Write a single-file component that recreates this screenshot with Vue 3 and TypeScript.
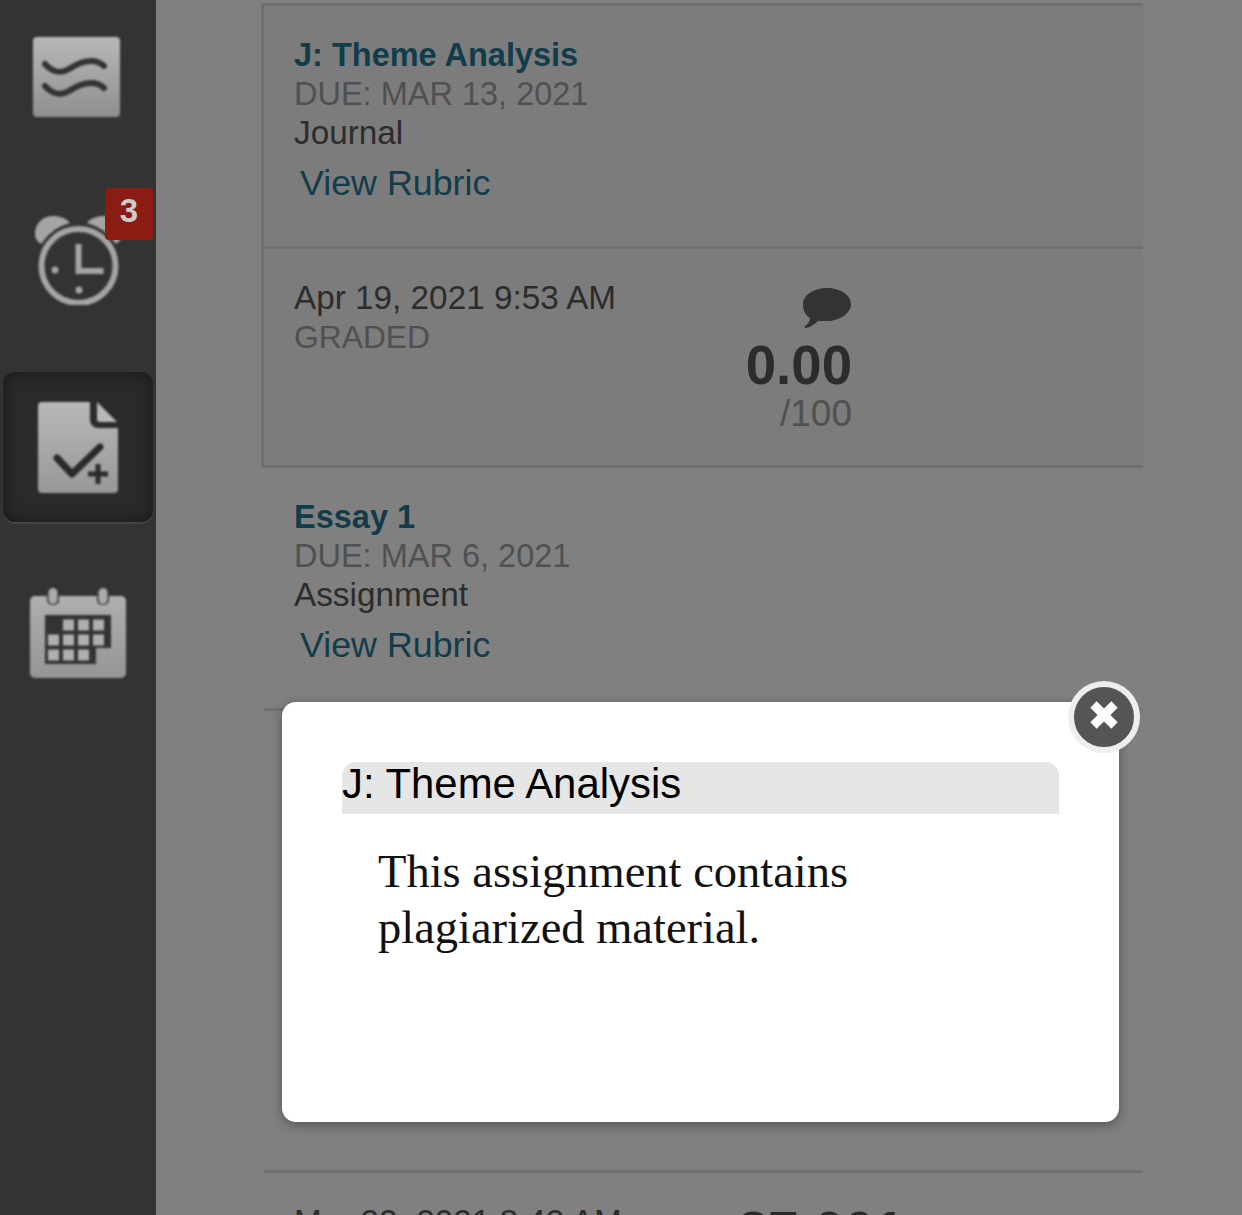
<script setup lang="ts">
interface Nav { id: string; active?: boolean }
const navs: Nav[] = [{ id: 'stream' }, { id: 'alarm' }, { id: 'grades', active: true }, { id: 'cal' }]
const calCells: [number, number][] = [
  [1, 0], [2, 0], [3, 0],
  [0, 1], [1, 1], [2, 1], [3, 1],
  [0, 2], [1, 2], [2, 2],
]
</script>

<template>
  <div class="page">
    <aside class="side">
      <div v-for="n in navs" :key="n.id" class="nav" :class="[n.id, { active: n.active }]">
        <svg v-if="n.id === 'stream'" width="90" height="82" viewBox="0 0 90 82">
          <defs>
            <linearGradient id="g1" x1="0" y1="0" x2="0" y2="1">
              <stop offset="0" stop-color="#b8b8b8" /><stop offset="1" stop-color="#8f8f8f" />
            </linearGradient>
          </defs>
          <rect x="2" y="1" width="87" height="80" rx="4" fill="url(#g1)" />
          <path d="M14 28C21 36 30 38 38 33S62 20 73 30M14 50C21 58 30 60 38 55S62 42 73 52" fill="none" stroke="#333" stroke-width="6" stroke-linecap="round" />
        </svg>
        <template v-else-if="n.id === 'alarm'">
          <svg width="93" height="96" viewBox="0 0 93 96">
            <path d="M3 25C3 14 11 7 21 7C28 7 34 9 38 14C25 18 16 25 10 35C5 33 3 29 3 25Z" fill="#a5a5a5" />
            <path d="M90 25C90 14 82 7 72 7C65 7 59 9 55 14C68 18 77 25 83 35C88 33 90 29 90 25Z" fill="#a5a5a5" />
            <circle cx="46.500" cy="57" r="37" fill="#333" stroke="#333" stroke-width="12" />
            <circle cx="46.500" cy="57" r="37" fill="#333" stroke="#a5a5a5" stroke-width="6" />
            <path d="M46.500 35v27h25" fill="none" stroke="#a5a5a5" stroke-width="6" />
            <circle cx="23" cy="61" r="3.500" fill="#a5a5a5" /><circle cx="47" cy="81" r="3.500" fill="#a5a5a5" />
          </svg>
          <span class="badge">3</span>
        </template>
        <svg v-else-if="n.id === 'grades'" width="82" height="94" viewBox="-1 -1 82 94">
          <defs>
            <linearGradient id="g2" x1="0" y1="0" x2="0" y2="1">
              <stop offset="0" stop-color="#b8b8b8" /><stop offset="1" stop-color="#989898" />
            </linearGradient>
          </defs>
          <path d="M4 1H52V19a8 8 0 0 0 8 8H80V88a4 4 0 0 1-4 4H4a4 4 0 0 1-4-4V5a4 4 0 0 1 4-4z" fill="url(#g2)" />
          <path d="M59 1L79 21H62a3 3 0 0 1-3-3z" fill="#b8b8b8" />
          <path d="M19 57L34 73L62 46" fill="none" stroke="#2a2a2a" stroke-width="7" stroke-linecap="round" stroke-linejoin="round" />
          <path d="M50 73h20M60 63v20" fill="none" stroke="#2a2a2a" stroke-width="5" />
        </svg>
        <svg v-else width="96" height="91" viewBox="0 0 96 91">
          <defs>
            <linearGradient id="g3" x1="0" y1="0" x2="0" y2="1">
              <stop offset="0" stop-color="#afafaf" /><stop offset="1" stop-color="#959595" />
            </linearGradient>
          </defs>
          <rect x="0" y="9" width="96" height="82" rx="5" fill="url(#g3)" />
          <rect x="17" y="0" width="12" height="18" rx="5" fill="#333" /><rect x="67" y="0" width="12" height="18" rx="5" fill="#333" />
          <rect x="18.500" y="1" width="9" height="16" rx="4.500" fill="#aaa" /><rect x="68.500" y="1" width="9" height="16" rx="4.500" fill="#aaa" />
          <path d="M15 28H81V61H66V77H15Z" fill="#333" />
          <rect v-for="(c, i) in calCells" :key="i" :x="18 + c[0] * 15" :y="32.500 + c[1] * 15" width="11" height="11" fill="#b0b0b0" />
        </svg>
      </div>
    </aside>

    <main class="main">
      <div class="list">
        <section class="card selected">
          <div class="info">
            <a class="title">J: Theme Analysis</a>
            <div class="due">DUE: MAR 13, 2021</div>
            <div class="kind">Journal</div>
            <a class="rubric">View Rubric</a>
          </div>
          <div class="sub">
            <div class="when">
              <div class="date">Apr 19, 2021 9:53 AM</div>
              <div class="status">GRADED</div>
            </div>
            <div class="score">
              <svg width="50" height="42" viewBox="0 0 50 42">
                <path d="M25 1c13 0 24 7 24 16s-11 17-24 17c-3 0-6 0-9 0-3 3-7 6-12 7-1 0-2-1-1-2 3-2 5-5 5-8C3 28 1 23 1 17 1 8 12 1 25 1z" fill="#333" />
              </svg>
              <div class="num">0.00</div>
              <div class="of">/100</div>
            </div>
          </div>
        </section>
        <section class="card">
          <div class="info">
            <a class="title">Essay 1</a>
            <div class="due">DUE: MAR 6, 2021</div>
            <div class="kind">Assignment</div>
            <a class="rubric">View Rubric</a>
          </div>
          <div class="sub spacer"></div>
        </section>
        <section class="card next">
          <div class="info blank"></div>
          <div class="sub last">
            <div class="when">
              <div class="date">Mar 22, 2021 8:42 AM</div>
            </div>
            <div class="cut">87.001</div>
          </div>
        </section>
      </div>
    </main>

    <div class="modal">
      <h2 class="m-title">J: Theme Analysis</h2>
      <p class="m-body">This assignment contains<br />plagiarized material.</p>
      <button class="close" aria-label="Close">
        <svg width="32" height="32" viewBox="0 0 32 32">
          <path d="M5.500 5.500l21 21M26.500 5.500l-21 21" stroke="#fff" stroke-width="9" />
        </svg>
      </button>
    </div>
  </div>
</template>

<style>
html, body { margin: 0; background: #808080; overflow: hidden; }
</style>

<style scoped>
.page {
  position: relative;
  display: flex;
  width: 1242px;
  height: 1215px;
  overflow: hidden;
  background: #808080;
  font-family: "Liberation Sans", Arial, sans-serif;
}
.side {
  flex: 0 0 156px;
  background: #333;
  padding-top: 30px;
  box-sizing: border-box;
}
.nav {
  position: relative;
  display: flex;
  justify-content: center;
  align-items: center;
  margin-left: 3px;
  width: 150px;
  box-sizing: border-box;
}
.nav svg { display: block; filter: blur(0.8px); flex: none; }
.nav.stream { height: 94px; padding-right: 4px; margin-bottom: 60px; }
.nav.alarm { height: 128px; padding-top: 18px; margin-bottom: 60px; }
.nav.active {
  height: 150px;
  background: #2b2b2b;
  border-radius: 12px;
  box-shadow: inset 0 0 18px #181818, 0 2px 1px #444;
  margin-bottom: 63px;
}
.nav.cal { height: 94px; padding-top: 1px; }
.badge {
  position: absolute;
  top: 4px;
  right: 0;
  width: 48px;
  height: 52px;
  background: #8b1c13;
  border-radius: 4px;
  color: #ccc;
  font-size: 33px;
  font-weight: 700;
  text-align: center;
  line-height: 46px;
}
.main { flex: 1; padding: 3px 0 0 105px; }
.list { width: 882px; }
.info { height: 240px; box-sizing: border-box; padding: 29px 0 0 30px; }
.info.blank { height: 243px; padding: 0; }
.card.selected {
  background: #7c7c7c;
  border: 3px solid #707070;
  border-right: 0;
}
.card:not(.selected) { margin-left: 3px; }
.card.next { margin-left: 1px; }
.card.next .last { margin-left: 2px; }
.title { display: block; color: #123c4a; font-size: 32.500px; font-weight: 700; line-height: 40px; }
.due { color: #505050; font-size: 32.500px; line-height: 38px; }
.kind { color: #2c2c2c; font-size: 33.300px; line-height: 40px; }
.rubric { display: block; margin: 10px 0 0 6px; color: #123c4a; font-size: 35.800px; line-height: 40px; }
.sub {
  display: flex;
  justify-content: space-between;
  height: 219px;
  border-top: 3px solid #707070;
  padding: 29px 0 0 30px;
  box-sizing: border-box;
}
.date { color: #2c2c2c; font-size: 33.300px; line-height: 40px; }
.status { color: #505050; font-size: 31.800px; line-height: 38px; }
.score {
  display: flex;
  flex-direction: column;
  align-items: flex-end;
  margin-top: 9px;
  padding-right: 291px;
}
.num { color: #2c2c2c; font-size: 54.600px; font-weight: 700; line-height: 50px; margin-top: 12px; }
.of { color: #505050; font-size: 37px; line-height: 46px; }
.last { justify-content: flex-start; }
.last .when { flex: 0 0 444px; }
.cut { color: #2c2c2c; font-size: 54.600px; font-weight: 700; line-height: 50px; margin-top: 5px; }

.modal {
  position: absolute;
  left: 282px;
  top: 702px;
  width: 837px;
  height: 420px;
  box-sizing: border-box;
  padding: 60px 60px 0;
  background: #fff;
  border-radius: 14px;
  box-shadow: 0 3px 12px rgba(0, 0, 0, 0.35);
}
.m-title {
  margin: 0;
  height: 52px;
  background: #e6e6e6;
  border-radius: 14px 14px 0 0;
  color: #000;
  font-size: 41.900px;
  font-weight: 400;
  line-height: 44px;
}
.m-body {
  margin: 30px 0 0 36px;
  color: #111;
  font-family: "Liberation Serif", Georgia, serif;
  font-size: 46.500px;
  line-height: 56px;
}
.close {
  position: absolute;
  top: -21px;
  right: -21px;
  width: 72px;
  height: 72px;
  padding: 0 0 5px;
  display: flex;
  align-items: center;
  justify-content: center;
  background: #555;
  border: 6px solid #eee;
  border-radius: 50%;
  box-sizing: border-box;
}
.close svg { filter: blur(0.7px); flex: none; }
</style>
